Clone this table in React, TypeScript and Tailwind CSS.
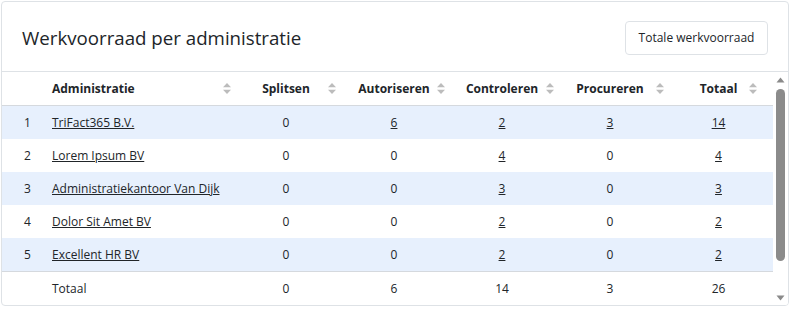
import React from "react";

type Row = { i: number; name: string; s: number; a: number; c: number; p: number; t: number };

const rows: Row[] = [
  { i: 1, name: "TriFact365 B.V.", s: 0, a: 6, c: 2, p: 3, t: 14 },
  { i: 2, name: "Lorem Ipsum BV", s: 0, a: 0, c: 4, p: 0, t: 4 },
  { i: 3, name: "Administratiekantoor Van Dijk", s: 0, a: 0, c: 3, p: 0, t: 3 },
  { i: 4, name: "Dolor Sit Amet BV", s: 0, a: 0, c: 2, p: 0, t: 2 },
  { i: 5, name: "Excellent HR BV", s: 0, a: 0, c: 2, p: 0, t: 2 },
];

const COLS = "grid grid-cols-[36px_194px_108px_108px_108px_108px_109px]";

function SortIcon() {
  return (
    <svg width="8" height="11" viewBox="0 0 8 11" className="block">
      <path d="M4 0L8 4.3H0Z" fill="#bcbcbc" />
      <path d="M0 6.7H8L4 11Z" fill="#bcbcbc" />
    </svg>
  );
}

function NumHead({ label, mr }: { label: string; mr: string }) {
  return (
    <div className="grid grid-cols-[1fr_auto_1fr] items-center h-full">
      <span />
      <span>{label}</span>
      <span className={`justify-self-end ${mr}`}>
        <SortIcon />
      </span>
    </div>
  );
}

function Val({ v }: { v: number }) {
  return (
    <div className="flex items-center justify-center h-full">
      {v > 0 ? <a className="underline cursor-pointer">{v}</a> : <span>{v}</span>}
    </div>
  );
}

export default function App() {
  return (
    <div className="p-px w-[790px] h-[310px] bg-white font-['Open_Sans',sans-serif] text-[#212529]">
      <div className="w-[788px] h-[305px] border border-[#dee2e6] rounded-[4px] flex flex-col overflow-hidden">
        <div className="h-[70px] shrink-0 border-b border-[#dee2e6] flex items-center justify-between pl-5 pr-5">
          <h5 className="text-[18.7px] leading-none pt-[4px]">Werkvoorraad per administratie</h5>
          <button className="h-[34px] w-[143px] border border-[#dee2e6] rounded-[4px] text-[12px] bg-white mt-[2px]">
            Totale werkvoorraad
          </button>
        </div>
        <div className="flex-1 flex min-h-0">
          <div className="w-[771px] overflow-hidden text-[12px]">
            <div className={`${COLS} h-[34px] border-b border-[#d5d9de] font-bold items-center`}>
              <div />
              <div className="flex items-center justify-between pl-[14px] pr-[1px]">
                <span>Administratie</span>
                <SortIcon />
              </div>
              <NumHead label="Splitsen" mr="mr-[4px]" />
              <NumHead label="Autoriseren" mr="mr-[3px]" />
              <NumHead label="Controleren" mr="mr-[2px]" />
              <NumHead label="Procureren" mr="mr-[0px]" />
              <NumHead label="Totaal" mr="mr-[16px]" />
            </div>
            {rows.map((r) => (
              <div
                key={r.i}
                className={`${COLS} h-[33px] items-center ${r.i % 2 === 1 ? "bg-[#e7f0fd]" : "bg-white"}`}
              >
                <div className="pl-[15px] text-center">{r.i}</div>
                <div className="pl-[14px]">
                  <a className="underline cursor-pointer">{r.name}</a>
                </div>
                <Val v={r.s} />
                <Val v={r.a} />
                <Val v={r.c} />
                <Val v={r.p} />
                <Val v={r.t} />
              </div>
            ))}
            <div className={`${COLS} h-[34px] items-center border-t border-[#d5d9de]`}>
              <div />
              <div className="pl-[14px]">Totaal</div>
              <div className="text-center">0</div>
              <div className="text-center">6</div>
              <div className="text-center">14</div>
              <div className="text-center">3</div>
              <div className="text-center">26</div>
            </div>
          </div>
          <div className="w-[15px] flex flex-col items-center bg-white">
            <svg width="15" height="15" viewBox="0 0 15 15" className="block shrink-0">
              <path d="M3.5 10.5L7.5 5.5L11.5 10.5Z" fill="#8a8a8a" />
            </svg>
            <div className="flex-1 w-full flex flex-col items-center pb-[30px] pt-[2px]">
              <div className="w-[9px] h-[172px] rounded-full bg-[#8b8b8b]" />
            </div>
            <svg width="15" height="15" viewBox="0 0 15 15" className="block shrink-0">
              <path d="M3.5 4.5L11.5 4.5L7.5 9.5Z" fill="#8a8a8a" />
            </svg>
          </div>
        </div>
      </div>
    </div>
  );
}
